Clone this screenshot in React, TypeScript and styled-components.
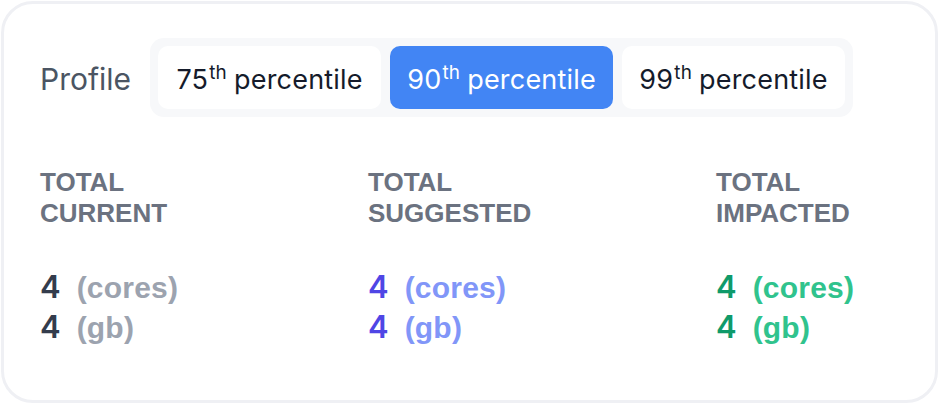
import React, { useState } from 'react';
import styled, { createGlobalStyle } from 'styled-components';

const GlobalStyle = createGlobalStyle`
    html, body {
        margin: 0;
        padding: 0;
        background: #ffffff;
    }
    body {
        font-family: Inter, "Liberation Sans", Arial, sans-serif;
    }
`;

const Card = styled.section`
    box-sizing: border-box;
    width: 937px;
    height: 402px;
    margin: 1px 0 0 1px;
    border: 3px solid #eff0f4;
    border-radius: 32px;
    background: #ffffff;
    padding: 34px 37px 0 36px;
`;

const Header = styled.div`
    display: flex;
    align-items: center;
    gap: 19px;
`;

const ProfileLabel = styled.span`
    font-size: 30px;
    color: #4b5563;
    margin-top: 3px;
`;

const Segmented = styled.div`
    display: flex;
    gap: 9px;
    padding: 8px;
    background: #f7f8fa;
    border-radius: 14px;
`;

const Segment = styled.button<{ $active: boolean }>`
    display: flex;
    align-items: center;
    justify-content: center;
    width: 223px;
    height: 63px;
    padding: 0;
    border: none;
    border-radius: 10px;
    font-family: Inter, "Liberation Sans", Arial, sans-serif;
    font-size: 27px;
    font-weight: 400;
    letter-spacing: 0.2px;
    cursor: pointer;
    background: ${p => (p.$active ? '#4285f4' : '#ffffff')};
    color: ${p => (p.$active ? '#ffffff' : '#151b2b')};
`;

const SegmentText = styled.span`
    white-space: nowrap;
    margin-top: 3px;
`;

const Sup = styled.sup`
    font-size: 0.7em;
    line-height: 0;
    vertical-align: 0.5em;
    margin-left: 1px;
    margin-right: 7px;
`;

const Stats = styled.div`
    display: grid;
    grid-template-columns: 328px 348px 1fr;
    margin-top: 50px;
`;

const Column = styled.div`
    display: flex;
    flex-direction: column;
`;

const Label = styled.div`
    font-family: "Liberation Sans", Arial, sans-serif;
    font-weight: 700;
    font-size: 26px;
    line-height: 31px;
    color: #6b7280;
    text-transform: uppercase;
    margin-bottom: 38px;
`;

const ValueRow = styled.div`
    display: flex;
    align-items: baseline;
    height: 40px;
    line-height: 40px;
`;

const Num = styled.span<{ $color: string }>`
    font-family: Inter, "Liberation Sans", Arial, sans-serif;
    font-weight: 600;
    font-size: 31px;
    color: ${p => p.$color};
    margin-right: 16px;
`;

const Unit = styled.span<{ $color: string }>`
    font-family: "Liberation Sans", Arial, sans-serif;
    font-weight: 700;
    font-size: 30px;
    letter-spacing: 0.2px;
    color: ${p => p.$color};
`;

const percentiles = ['75', '90', '99'];

const stats = [
    { label: ['Total', 'Current'], num: '#333c4c', unit: '#9ca3af' },
    { label: ['Total', 'Suggested'], num: '#4f46e5', unit: '#8196f8' },
    { label: ['Total', 'Impacted'], num: '#0f9a6a', unit: '#30c38d' },
];

const App: React.FC = () => {
    const [selected, setSelected] = useState('90');

    return (
        <>
            <GlobalStyle />
            <Card>
                <Header>
                    <ProfileLabel>Profile</ProfileLabel>
                    <Segmented>
                        {percentiles.map(p => (
                            <Segment key={p} $active={selected === p} onClick={() => setSelected(p)}>
                                <SegmentText>
                                    {p}<Sup>th</Sup>percentile
                                </SegmentText>
                            </Segment>
                        ))}
                    </Segmented>
                </Header>
                <Stats>
                    {stats.map(s => (
                        <Column key={s.label[1]}>
                            <Label>
                                {s.label[0]}<br />{s.label[1]}
                            </Label>
                            <ValueRow>
                                <Num $color={s.num}>4</Num>
                                <Unit $color={s.unit}>(cores)</Unit>
                            </ValueRow>
                            <ValueRow>
                                <Num $color={s.num}>4</Num>
                                <Unit $color={s.unit}>(gb)</Unit>
                            </ValueRow>
                        </Column>
                    ))}
                </Stats>
            </Card>
        </>
    );
};

export default App;
